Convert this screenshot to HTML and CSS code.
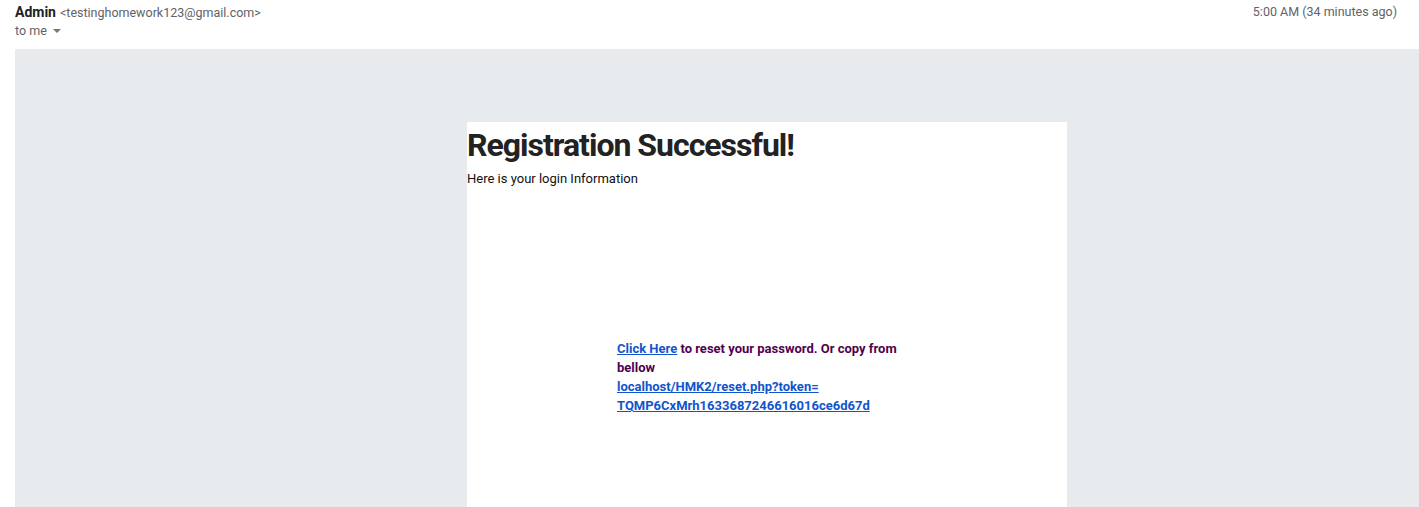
FILE: index.html
```html
<!DOCTYPE html>
<html>
<head>
<meta charset="utf-8">
<link rel="stylesheet" href="styles.css">
</head>
<body>
<div class="header">
  <div class="sender">
    <div class="from"><span class="name">Admin</span> <span class="email">&lt;testinghomework123@gmail.com&gt;</span></div>
    <div class="to">to me <span class="caret"></span></div>
  </div>
  <div class="time">5:00 AM (34 minutes ago)</div>
</div>
<div class="mailbody">
  <div class="card">
    <h1 class="title">Registration Successful!</h1>
    <p class="intro">Here is your login Information</p>
    <div class="reset">
      <p class="line"><a href="#" class="link">Click Here</a> to reset your password. Or copy from bellow</p>
      <p class="line"><a href="#" class="link">localhost/HMK2/reset.php?token=<wbr>TQMP6CxMrh1633687246616016ce6d67d</a></p>
    </div>
  </div>
</div>
</body>
</html>
```

FILE: styles.css
```css
html, body {
  margin: 0;
  padding: 0;
  background: #fff;
  font-family: Roboto, "Liberation Sans", Arial, sans-serif;
  overflow: hidden;
}
.header {
  height: 49px;
  box-sizing: border-box;
  padding: 3px 22px 0 15px;
  display: flex;
  justify-content: space-between;
  align-items: flex-start;
}
.from {
  line-height: 17px;
}
.name {
  font-size: 14px;
  font-weight: 700;
  color: #202124;
}
.email {
  font-size: 12.5px;
  color: #5f6368;
}
.to {
  margin-top: 1px;
  font-size: 12.5px;
  line-height: 17px;
  color: #5f6368;
  display: flex;
  align-items: center;
}
.caret {
  display: inline-block;
  margin-left: 6px;
  width: 0;
  height: 0;
  border-left: 4px solid transparent;
  border-right: 4px solid transparent;
  border-top: 4px solid #777;
  margin-top: 1px;
}
.time {
  font-size: 12.5px;
  line-height: 17px;
  color: #5f6368;
}
.mailbody {
  margin-left: 15px;
  background: #e8ebee;
  padding: 73px 0 0 452px;
  height: 458px;
  box-sizing: border-box;
}
.card {
  width: 600px;
  height: 385px;
  background: #fff;
  box-sizing: border-box;
  padding-top: 5px;
}
.title {
  margin: 0;
  font-size: 32px;
  font-weight: 700;
  line-height: 37px;
  color: #222;
  letter-spacing: -1px;
}
.intro {
  margin: 7px 0 0;
  font-size: 13px;
  line-height: 16px;
  color: #111;
}
.reset {
  width: 300px;
  margin: 152px auto 0;
  font-size: 13px;
  font-weight: 700;
  line-height: 19px;
  color: #500050;
}
.line {
  margin: 0;
}
.link {
  color: #1155cc;
  text-decoration: underline;
}
```
